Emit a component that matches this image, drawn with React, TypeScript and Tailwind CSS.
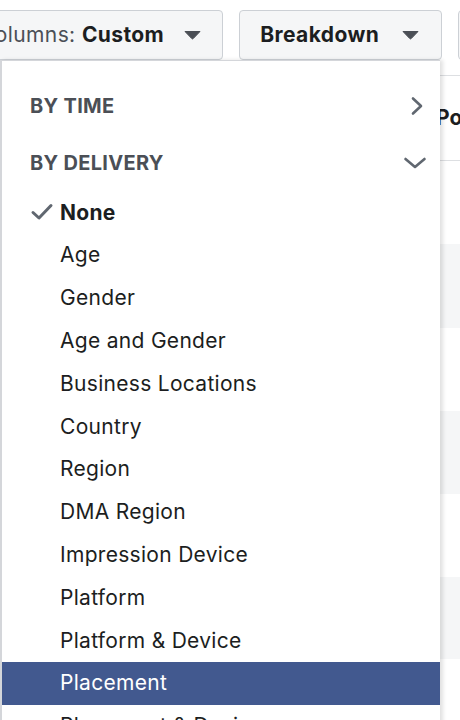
import React from "react";

const font = { fontFamily: "Inter, 'Liberation Sans', sans-serif" };

function Caret() {
  return (
    <svg width="17" height="10" viewBox="0 0 17 10" className="shrink-0">
      <path d="M1 1.5 H16 L9.2 8.6 Q8.5 9.3 7.8 8.6 Z" fill="#4b4f56" stroke="#4b4f56" strokeWidth="1" strokeLinejoin="round" />
    </svg>
  );
}

const items = [
  "Age",
  "Gender",
  "Age and Gender",
  "Business Locations",
  "Country",
  "Region",
  "DMA Region",
  "Impression Device",
  "Platform",
  "Platform & Device",
  "Placement",
  "Placement & Device",
];

export default function App() {
  return (
    <div className="relative w-[460px] h-[720px] overflow-hidden bg-white text-[#1c1e21]" style={font}>
      {/* toolbar */}
      <div className="flex items-center gap-[16px] pt-[10px] ml-[-42px] whitespace-nowrap">
        <div className="flex items-center shrink-0 h-[50px] pl-[20px] pr-[21px] gap-[20px] bg-[#f5f6f7] border border-[#ccd0d5] rounded-[4px] text-[21px] tracking-[0.4px]">
          <span>
            <span className="text-[#4b4f56]">Columns: </span>
            <span className="font-bold">Custom</span>
          </span>
          <Caret />
        </div>
        <div className="flex items-center shrink-0 h-[50px] w-[203px] pl-[20px] pr-[22px] justify-between bg-[#f5f6f7] border border-[#ccd0d5] rounded-[4px] text-[21px] tracking-[0.4px] font-bold">
          <span>Breakdown</span>
          <Caret />
        </div>
        <div className="h-[50px] w-[60px] shrink-0 bg-[#f5f6f7] border border-[#ccd0d5] rounded-[4px]" />
      </div>

      {/* table behind */}
      <div className="mt-[15px] border-t border-[#dddfe2]">
        <div className="flex items-center h-[85px] border-b border-[#dddfe2] whitespace-nowrap">
          <div className="w-[436px] shrink-0" />
          <span className="text-[21px] font-bold text-[#1c1e21]">Post</span>
        </div>
        <div className="h-[83px]" />
        <div className="h-[84px] bg-[#f5f6f7]" />
        <div className="h-[83px]" />
        <div className="h-[83px] bg-[#f5f6f7]" />
        <div className="h-[83px]" />
        <div className="h-[82px] bg-[#f5f6f7]" />
        <div className="h-[83px]" />
      </div>

      {/* dropdown menu */}
      <div className="absolute left-0 top-[60px] w-[440px] h-[700px] bg-white border-l-[2px] border-t border-[#d4d6da] shadow-[3px_0_4px_rgba(0,0,0,0.12)] whitespace-nowrap">
        <div className="pt-[16px]">
          <div className="flex items-center justify-between h-[57px] pl-[28px] pr-[16px]">
            <span className="text-[20px] font-bold tracking-[0.3px] text-[#4b4f56]">BY TIME</span>
            <svg width="14" height="20" viewBox="0 0 14 20">
              <path d="M3 2.5 L11 10 L3 17.5" fill="none" stroke="#606770" strokeWidth="2.6" strokeLinecap="round" strokeLinejoin="round" />
            </svg>
          </div>
          <div className="flex items-center justify-between h-[57px] pl-[28px] pr-[13px]">
            <span className="text-[20px] font-bold tracking-[0.3px] text-[#4b4f56]">BY DELIVERY</span>
            <svg width="24" height="14" viewBox="0 0 24 14">
              <path d="M2.5 3 L12 11 L21.5 3" fill="none" stroke="#606770" strokeWidth="2.6" strokeLinecap="round" strokeLinejoin="round" />
            </svg>
          </div>
          <div className="flex items-center h-[42.8px] pl-[28px] text-[21px] tracking-[0.3px] font-bold">
            <svg width="24" height="18" viewBox="0 0 24 18" className="mr-[6px]">
              <path d="M3 9.5 L9 15 L21 2.5" fill="none" stroke="#606770" strokeWidth="3" strokeLinecap="round" strokeLinejoin="round" />
            </svg>
            <span>None</span>
          </div>
          {items.map((t) => (
            <div
              key={t}
              className={
                t === "Placement"
                  ? "flex items-center h-[42.8px] pl-[58px] text-[21px] tracking-[0.3px] bg-[#42598f] text-white"
                  : "flex items-center h-[42.8px] pl-[58px] text-[21px] tracking-[0.3px]"
              }
            >
              {t}
            </div>
          ))}
        </div>
      </div>
    </div>
  );
}
